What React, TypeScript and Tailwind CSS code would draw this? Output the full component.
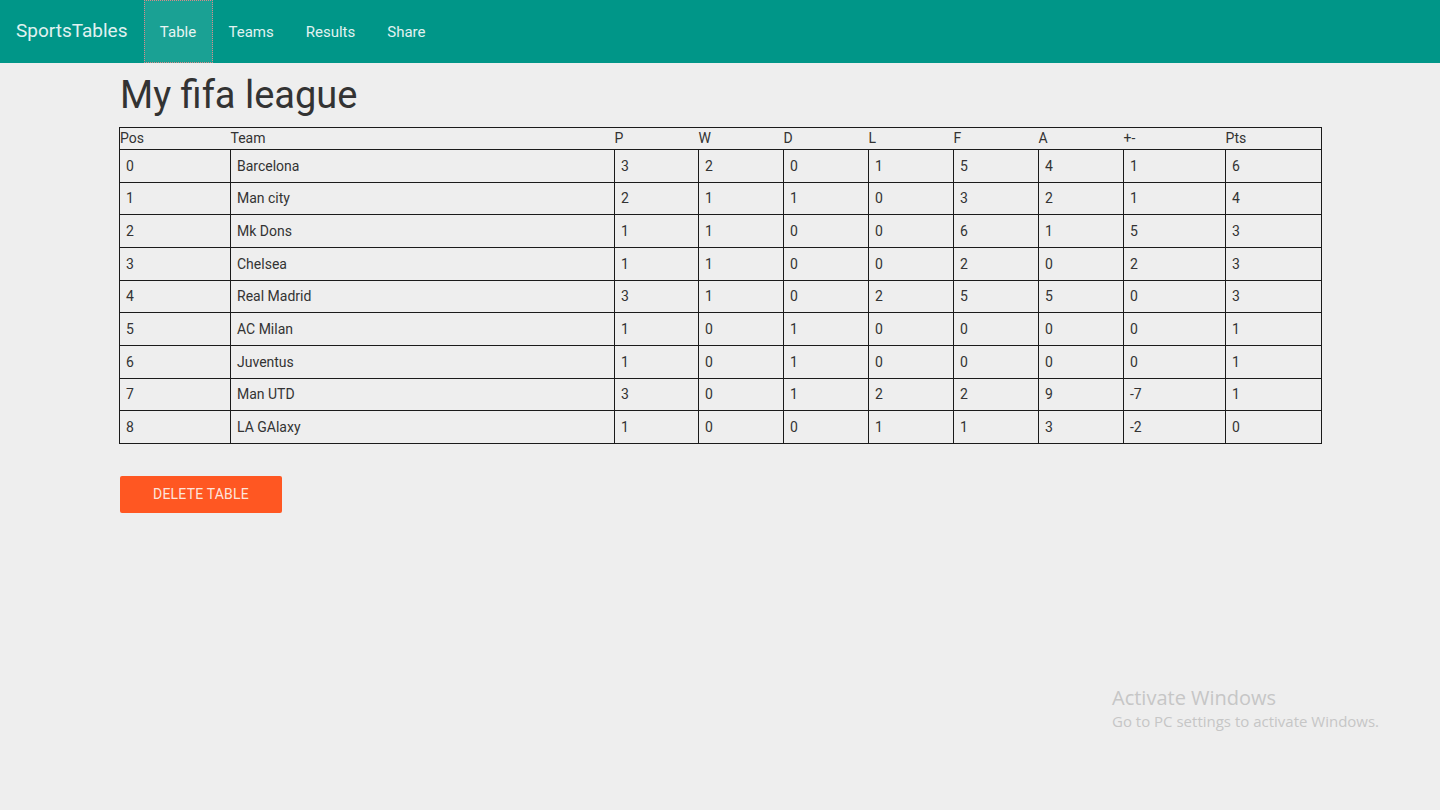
const rows: [string, string, number, number, number, number, number, number, number, number][] = [
  ["0", "Barcelona", 3, 2, 0, 1, 5, 4, 1, 6],
  ["1", "Man city", 2, 1, 1, 0, 3, 2, 1, 4],
  ["2", "Mk Dons", 1, 1, 0, 0, 6, 1, 5, 3],
  ["3", "Chelsea", 1, 1, 0, 0, 2, 0, 2, 3],
  ["4", "Real Madrid", 3, 1, 0, 2, 5, 5, 0, 3],
  ["5", "AC Milan", 1, 0, 1, 0, 0, 0, 0, 1],
  ["6", "Juventus", 1, 0, 1, 0, 0, 0, 0, 1],
  ["7", "Man UTD", 3, 0, 1, 2, 2, 9, -7, 1],
  ["8", "LA GAlaxy", 1, 0, 0, 1, 1, 3, -2, 0],
];

const headers = ["Pos", "Team", "P", "W", "D", "L", "F", "A", "+-", "Pts"];
const widths = ["w-[111px]", "w-[384px]", "w-[84px]", "w-[85px]", "w-[85px]", "w-[85px]", "w-[85px]", "w-[85px]", "w-[102px]", "w-[96px]"];

export default function App() {
  return (
    <div className="min-h-[810px] bg-[#eeeeee] font-['Roboto',sans-serif] text-[#333333] relative">
      {/* Navbar */}
      <nav className="h-[63px] bg-[#009688] flex items-stretch">
        <div className="flex items-center px-4 text-[19px] text-[#e0f2f1]">SportsTables</div>
        <a className="flex items-center justify-center w-[69px] pt-px text-[15px] text-[#e8f5f3] bg-white/10 outline-1 outline-dotted outline-[#d88a8a] -outline-offset-1">Table</a>
        <a className="flex items-center px-4 pt-px text-[15px] text-[#e0f2f1]">Teams</a>
        <a className="flex items-center px-4 pt-px text-[15px] text-[#e0f2f1]">Results</a>
        <a className="flex items-center px-4 pt-px text-[15px] text-[#e0f2f1]">Share</a>
      </nav>

      <main className="pl-[119px] pr-[119px]">
        <h1 className="text-[38px] leading-[46px] pt-[9px] pb-[9px] pl-px text-[#333333]">My fifa league</h1>

        <table className="table-fixed border-collapse border border-[#1a1a1a] w-[1202px] text-[14px]">
          <thead>
            <tr className="h-[22px] border-b border-[#1a1a1a]">
              {headers.map((h, i) => (
                <th key={h} className={`${widths[i]} text-left font-normal px-0 leading-[21px]`}>{h}</th>
              ))}
            </tr>
          </thead>
          <tbody>
            {rows.map((r) => (
              <tr key={r[0]} className="h-[32.67px]">
                {r.map((c, i) => (
                  <td key={i} className="border border-[#1a1a1a] pl-[6px] align-middle leading-[20px]">{c}</td>
                ))}
              </tr>
            ))}
          </tbody>
        </table>

        <button className="mt-[32px] ml-px w-[162px] h-[37px] bg-[#ff5722] rounded-[2px] text-[14px] text-[#fde4dc] tracking-[0.2px] uppercase">
          Delete table
        </button>
      </main>

      {/* Windows watermark */}
      <div className="absolute left-[1112px] top-[685px] text-[#c6c6c6] font-['Open_Sans',sans-serif]">
        <div className="text-[20px] leading-[25px]">Activate Windows</div>
        <div className="text-[15px] leading-[22px]">Go to PC settings to activate Windows.</div>
      </div>
    </div>
  );
}
